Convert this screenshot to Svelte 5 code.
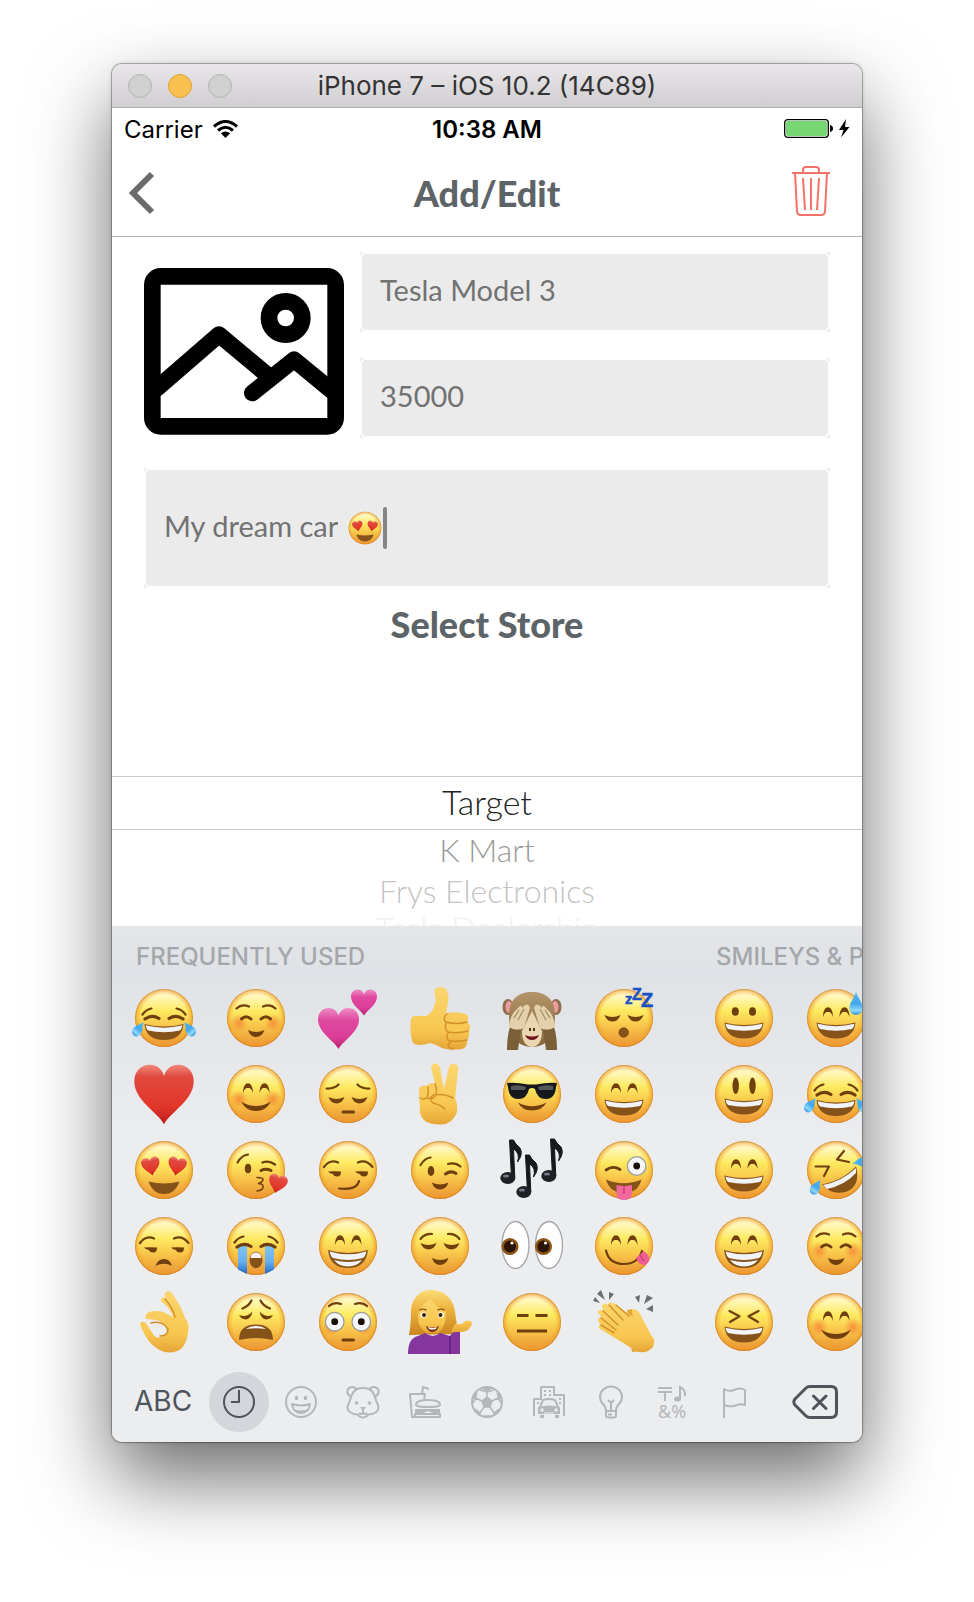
<script>
  let name = $state('Tesla Model 3');
  let price = $state('35000');
  let note = $state('My dream car');
  let store = $state('Target');
  const stores = ['Target', 'K Mart', 'Frys Electronics', 'Tesla Dealership'];

  const ink = '#6f3f0e';
  const line = (d, w = 2.2) =>
    `<path d="${d}" fill="none" stroke="${ink}" stroke-width="${w}" stroke-linecap="round" stroke-linejoin="round"/>`;
  const shape = (d, fill = '#85521a') => `<path d="${d}" fill="${fill}"/>`;
  const disc = `<circle cx="32" cy="32" r="29" fill="url(#skin)"/><circle cx="32" cy="32" r="29" fill="url(#rim)"/>`;
  const blush = `<circle cx="15" cy="37" r="9" fill="url(#blush)"/><circle cx="49" cy="37" r="9" fill="url(#blush)"/>`;
  const heart = (x, y, s, fill = 'url(#red)', r = 0) =>
    `<path transform="translate(${x} ${y}) rotate(${r}) scale(${s}) translate(-10 -10)" fill="${fill}" d="M10 20C8 16 0 12 0 5.5C0 2.3 2.2 0 5.2 0C7.6 0 9.4 1.500 10 3.800C10.600 1.500 12.400 0 14.800 0C17.800 0 20 2.300 20 5.500C20 12 12 16 10 20Z"/>`;
  const drop = (x, y, s = 1, r = 0) =>
    `<path transform="translate(${x} ${y}) rotate(${r}) scale(${s})" fill="url(#water)" d="M0 -11C2 -5 6 -1 6 4A6 6 0 0 1 -6 4C-6 -1 -2 -5 0 -11Z"/>`;
  const arch = (x, y) =>
    `<path d="M${x} ${y}C${x} ${y - 13} ${x + 10} ${y - 13} ${x + 10} ${y}C${x + 8} ${y - 5} ${x + 7} ${y - 5} ${x + 5} ${y - 5}C${x + 3} ${y - 5} ${x + 2} ${y - 5} ${x} ${y}Z" fill="${ink}"/>`;
  const arches = (y = 31) => arch(19, y) + arch(35.500, y);
  const bumps = line('M17.500 33Q22 28.500 27 33M37 33Q42 28.500 46.500 33', 3);
  const browsUp = line('M12.500 22.500Q18 17.500 25 20.500M39 20.500Q46 17.500 51.500 22.500');
  const lids = (y) => shape(`M12.500 ${y}Q20.500 ${y + 4} 28.500 ${y}Q26 ${y + 6.500} 20.500 ${y + 6.500}Q15 ${y + 6.500} 12.500 ${y}ZM35.500 ${y}Q43.500 ${y + 4} 51.500 ${y}Q49 ${y + 6.500} 43.500 ${y + 6.500}Q38 ${y + 6.500} 35.500 ${y}Z`, ink);
  const grin = (y = 37.500) =>
    shape(`M12.500 ${y}Q32 ${y + 5} 51.500 ${y}Q50 ${y + 16} 32 ${y + 16}Q14 ${y + 16} 12.500 ${y}Z`) +
    shape(`M13.500 ${y + 1.300}Q32 ${y + 6.200} 50.500 ${y + 1.300}Q50 ${y + 5} 48 ${y + 6.500}Q32 ${y + 10} 16 ${y + 6.500}Q14 ${y + 5} 13.500 ${y + 1.300}Z`, '#f1f3f6');
  const beam =
    shape('M12 36Q32 42 52 36Q50 54 32 54Q14 54 12 36Z') +
    shape('M13.500 37.500Q32 43 50.500 37.500Q49 43 47 44Q32 48 17 44Q15 43 13.500 37.500ZM18 46Q32 50 46 46Q41 52.500 32 52.500Q23 52.500 18 46Z', '#f1f3f6');
  const smallSmile = (y) => shape(`M24 ${y}Q32 ${y + 4} 40.500 ${y}Q38 ${y + 7} 32 ${y + 7}Q26 ${y + 7} 24 ${y}Z`, ink);
  const smile = shape('M17 39.500Q32 48.500 47 39.500Q42 49 32 49Q22 49 17 39.500Z', ink);
  const winkEyes =
    line('M12.500 27Q17 20 22.500 19.500M40 26Q47 24 52.500 28.500') +
    `<ellipse cx="23" cy="33" rx="3.300" ry="5" fill="${ink}"/>` + line('M37.500 36Q43 32 48 35.500', 3);
  const sideEyes = line('M8 29Q14 21 22 24.500M42 24.500Q50 21 56.500 29') +
    shape('M12 33.500Q18 33 25 33.500Q25 38.500 21.500 38.500Q17.500 38.500 17 36Q14 35.500 12 33.500ZM39 33.500Q45 33 52 33.500Q52 38.500 48.500 38.500Q44.500 38.500 44 36Q41 35.500 39 33.500Z', ink);
  const bigEye = (x, y) => `<circle cx="${x}" cy="${y}" r="9.300" fill="#f7f7f7" stroke="#9a9da0" stroke-width="1.300"/><circle cx="${x}" cy="${y}" r="3.400" fill="#17100a"/>`;
  const joyEyes = line('M10.500 28.500Q14 23.500 19.500 22.500M44.500 22.500Q50 23.500 53.500 28.500') + line('M13 33Q20 28 27 32.500M37 32.500Q44 28 51 33', 3.200);
  const note1 = (x, y, h) =>
    `<g transform="translate(${x} ${y})"><path d="M-1.500 0L0.500 ${h}L3.800 ${h}L2.500 9Q9.500 13 6.500 22Q12.500 14 9 8Q4 4 2.500 0Z" fill="#17191d" stroke="#17191d"/><ellipse cx="-3.200" cy="${h}" rx="7.500" ry="6" fill="#1d2025"/><ellipse cx="-5" cy="${h - 2}" rx="3" ry="1.500" fill="#727980"/></g>`;
  const seam = (d) => `<path d="${d}" fill="none" stroke="#d4912b" stroke-width="1.500" stroke-linecap="round"/>`;

  const art = {
    'tears of joy': disc + joyEyes + grin(38) + drop(6.500, 43, 0.800, 36) + drop(57.500, 43, 0.800, -36),
    'red heart': heart(32, 32.500, 2.970),
    'heart eyes': disc + heart(19, 28.500, 0.920, 'url(#red)', -10) + heart(45, 28.500, 0.920, 'url(#red)', 10) +
      shape('M16.500 43.500Q32 47.500 47.500 43.500Q43 56 32 56Q21 56 16.500 43.500Z'),
    unamused: disc + sideEyes + shape('M23.500 52Q26 45 32 45Q38 45 40 52Q32 47.500 23.500 52Z', ink),
    'ok hand':
      `<path fill="url(#hand)" d="M37 1C41 2 52 22 53 28Q58 34 56 42Q54 58 45 61Q36 65 26 59C16 53 12 44 8 34Q9 30 14 33Q17 38 21 44Q24 50 31 46Q36 43 34 39Q31 35 28 31Q20 29 14 29Q12 25 17 22Q28 19 35 24L41 27Q38 18 29 11Q28 7 33 8Q31 1 37 1Z"/><path fill="#ecedef" d="M22 36Q27 31 33 36Q37 43 29 45Q22 46 20 40Z"/>` +
      seam('M33 9Q41 18 43 27M19 33Q30 30 36 39Q36 46 28 46'),
    'soft smile': disc + blush + browsUp + bumps + smallSmile(44),
    'happy smile': disc + blush + arches() + smile,
    kiss: disc + line('M13.500 24.500Q18 17 24 16.500M38.500 24.500Q45 22 51 26.500') +
      `<ellipse cx="24" cy="30.500" rx="3.200" ry="4.800" fill="${ink}"/>` + line('M37 32.500Q42 30 47 32.500', 3) +
      line('M33 39.500Q40 39.500 39 42Q38 44.500 34.500 45.500Q40 46 39 49.500Q38 52.500 33 53', 1.600) + heart(53.500, 46, 0.940, 'url(#red)', 14),
    sobbing: disc + `<path d="M14 30H23V60L14 55.500ZM41 30H50V55.500L41 60Z" fill="url(#stream)"/>` + joyEyes +
      `<ellipse cx="32" cy="46" rx="6.500" ry="8.300" fill="#85521a"/>` + shape('M26.500 44Q27 38.500 32 38.500Q37 38.500 37.500 44Z', '#f4f4f4'),
    weary: disc + line('M18.500 18.500Q25 16 27.500 10.500M36.500 10.500Q39 16 46 18.500') +
      shape('M15 25Q23 28 28.500 21.500Q27 29 22 29.500Q17 29 15 25ZM49 25Q41 28 35.500 21.500Q37 29 42 29.500Q47 29 49 25Z', ink) +
      shape('M15 50Q15 34.500 32 34.500Q49 34.500 49 50Q32 46 15 50Z') + shape('M22 39Q26 36 32 36Q38 36 42 39Q32 37.500 22 39Z', '#f4f4f4'),
    'two hearts': heart(22.500, 42.500, 2.050, 'url(#pink)') + heart(48, 16.500, 1.300, 'url(#pink)'),
    pensive: disc + line('M10.500 26.500Q18 27 22.500 22.500M41.500 22.500Q46 27 53.500 26.500') + lids(35) + line('M27 50H37.500', 3),
    smirk: disc + sideEyes + line('M23 50.500Q41 52.500 43 43', 2.200),
    'beaming smile': disc + arches() + beam,
    flushed: disc + blush + line('M13 16Q18 11.500 25 14M39 14Q46 11.500 51 16') + bigEye(18.700, 31.700) + bigEye(45.300, 31.700) + line('M27 50H37.500', 3),
    'thumbs up':
      `<path fill="url(#hand)" d="M3 33Q4 29 10 30H18C24 28 27 19 28 14Q26 8 27 3Q32 -1 38 3C43 12 39 19 38 27Q50 25 58 28Q62 31 59 36Q64 39 61 45Q62 50 59 54Q60 61 54 63Q42 65 34 62Q27 58 22 57Q10 61 5 57Q1 46 3 33Z"/>` +
      seam('M39 28Q34 32 38 36Q48 39 59 36M38 37Q36 43 40 46Q49 48 60 45M40 47Q37 53 42 55Q50 56 59 54M42 56Q38 61 44 63'),
    victory:
      `<path fill="url(#hand)" d="M23 5Q24 1 28 1.500Q31 2 32 6L36 27L41 5Q43 1 47 2Q51 3 50 8L47 36Q50 43 49 50Q45 62 33 62.500Q14 63 12 50L11 27Q13 22 19 24Q22 19 27 22Z"/>` +
      seam('M20 25Q21 31 19 36Q15 38 12 36M27 22Q30 28 27 34Q24 38 20 36M45 36Q36 31 25 33Q20 37 25 41Q33 43 37 47'),
    wink: disc + winkEyes + smallSmile(44.500),
    relieved: disc + line('M12.500 25Q17 19.500 24 20M40 20Q47 19.500 51.500 25') + lids(29) + smallSmile(44),
    'tipping hand':
      `<path fill="url(#hair)" d="M1 45Q3 34 3 20C5 5 14 0 23 0C36 0 46 9 47 22Q49 35 50 44Z"/><path fill="url(#hand)" d="M10 25Q12 15 22 9Q31 19 38 22Q38 38 30 43H19Q9 38 10 25ZM43 42L47 34Q55 35 57 31Q64 30 64 34Q62 41 53 42Z"/><path fill="#84369e" d="M0 64Q0 48 10 46L17 43Q25 49 32 43L42 46Q44 42 48 42H52V64Z"/><path d="M42 46V64" stroke="#5c2176" stroke-width="1.500"/><ellipse cx="15.500" cy="25" rx="3" ry="2.800" fill="#fff"/><ellipse cx="33" cy="25" rx="3" ry="2.800" fill="#fff"/><circle cx="16" cy="25" r="2" fill="#3a2009"/><circle cx="32.500" cy="25" r="2" fill="#3a2009"/>` +
      line('M12 20Q15 18 18 20M30 20Q33 18 36 20', 1.200) + shape('M18 36Q24 39 31 36Q29 42 24 42Q20 42 18 36Z', '#78310f') + shape('M20 37Q25 39 29 37L28 39Q24 40 21 39Z', '#fff'),
    'covered eyes':
      `<ellipse cx="8" cy="21" rx="5.500" ry="8" fill="#8c6f48"/><ellipse cx="56" cy="21" rx="5.500" ry="8" fill="#8c6f48"/><ellipse cx="9" cy="21" rx="3.500" ry="6" fill="#ee9ba6"/><ellipse cx="55" cy="21" rx="3.500" ry="6" fill="#ee9ba6"/><path fill="url(#fur)" d="M9 28C9 14 18 6 32 6S55 14 55 28C55 42 53 60 32 61C11 60 9 42 9 28Z"/><path fill="#ead6b0" d="M32 25L42 45Q42 60 32 61Q22 60 22 45Z"/><path fill="#7b6037" d="M7 64Q7 50 10 41L21 42L18 64ZM57 64Q57 50 54 41L43 42L46 64Z"/><path fill="#e4d0aa" d="M9 41Q9 33 14 26L20 20Q22 19 22 22Q26 17 28 19Q31 20 29 25L24 42Q16 46 9 41ZM55 41Q55 33 50 26L44 20Q42 19 42 22Q38 17 36 19Q33 20 35 25L40 42Q48 46 55 41Z"/><path d="M14 32L19 24M18 34L24 23M50 32L45 24M46 34L40 23" stroke="#a98d61" stroke-width="1.200"/><path d="M30 42V45M34 42V45" stroke="#4e371d" stroke-width="2"/><path fill="#6e1720" d="M25 49Q32 52 39 49Q37 54 32 54Q27 54 25 49Z"/>`,
    sunglasses: disc + `<path fill="#16181b" d="M7 21Q16 20 28 22.500H36Q48 20 57 21L56 25Q55 37 46 37Q37 37 35 27Q32 25 29 27Q27 37 18 37Q9 37 8 25Z"/><path fill="#53585d" d="M11 24Q18 22 26 25L25 28H11ZM38 25Q46 22 53 24V28H39Z"/>` +
      shape('M18 40.500Q32 48 46.500 40.500Q42 48.500 32 48.500Q22 48.500 18 40.500Z', ink),
    'musical notes': note1(11, 2, 38) + note1(27, 17, 37) + note1(52, 1, 37),
    eyes: `<g stroke="#a3a5a8" stroke-width="1.300" fill="#fdfdfd"><ellipse cx="15.500" cy="31" rx="13.500" ry="23.500"/><ellipse cx="49" cy="31" rx="13.500" ry="23.500"/></g><g fill="#2b1305" stroke="#8d5617" stroke-width="2.500"><circle cx="10" cy="32.500" r="7.300"/><circle cx="43.500" cy="32.500" r="7.300"/></g><circle cx="12" cy="29" r="1.600" fill="#fff"/><circle cx="45.500" cy="29" r="1.600" fill="#fff"/>`,
    expressionless: disc + `<path d="M17 25.500H28.500M35.500 25.500H47.500M17 41H47" stroke="${ink}" stroke-width="3"/>`,
    sleeping: disc + lids(29) + `<circle cx="31.700" cy="46.500" r="4.600" fill="#85521a" stroke="${ink}"/><g font-family="Liberation Sans, sans-serif" font-weight="bold" fill="#1c52c4" stroke="#1c52c4" stroke-width=".6"><text x="33" y="17.500" font-size="15">z</text><text x="40" y="13.500" font-size="16">Z</text><text x="49" y="21" font-size="20">Z</text></g>`,
    'grinning squint': disc + arches() + grin(),
    'wink tongue': disc + line('M14 32Q21 27 28 31.500', 2.800) + bigEye(44.700, 28) +
      shape('M14 41.500Q32 49 49.500 41.500Q46 55 32 55Q18 55 14 41.500Z') + `<path d="M24.500 47Q32 49 40 47V56Q39 62 32 62Q25 62 24.500 56Z" fill="#f0699a"/><path d="M32 48V56" stroke="#cc3f78" stroke-width="1.500"/>`,
    yummy: disc + arches(31) + line('M14 36.500Q17 50 32 50Q46 50 50 37', 2.200) + `<path d="M44 44L52 37Q58 42 57 47Q53 54 47 49Z" fill="#ef5d93"/><path d="M48 41L52 47" stroke="#c93c74" stroke-width="1.300"/>`,
    clapping:
      `<path fill="#6c6f73" d="M1 11L3 7L8 13ZM5 4L9 0L13 10ZM17 2L22 4L17 10ZM43 7L48 5L47 13ZM52 14L55 5L61 8ZM54 19L61 15V22Z"/><path fill="#e5a63a" d="M35 20L40 19L47 30L50 61L40 62Z"/><path fill="url(#hand)" d="M6 31Q6 27 10 28L6 23Q6 18 11 21L10 16Q11 11 16 15Q17 10 23 14L41 27L40 20Q43 17 47 22L59 45Q64 50 61 57Q54 65 44 61L33 54L8 39Q5 35 9 35Z"/>` +
      seam('M11 21L26 35M17 15L31 30M9 28L24 40M24 15L37 26M9 35L22 43'),
    grinning: disc + `<ellipse cx="23.300" cy="25.500" rx="3.500" ry="4.300" fill="${ink}"/><ellipse cx="40.500" cy="25.500" rx="3.500" ry="4.300" fill="${ink}"/>` + grin(36.500),
    'wide grin': disc + `<ellipse cx="23.700" cy="23.800" rx="3.200" ry="8.300" fill="${ink}"/><ellipse cx="40.500" cy="23.800" rx="3.200" ry="8.300" fill="${ink}"/>` + grin(36.500),
    laughing: disc + line('M17.500 21L27.500 26.300L18 32M46.500 21L36.500 26.300L46 32') + grin(36.500),
    'sweat grin': disc + arches() + grin(36.500) + drop(52, 18, 1.100),
    'rolling laugh': disc + line('M11.500 28.500H25L20 38M40 13L33 21.500L45 24') +
      shape('M18 46.500Q38 43 52 28.500Q57 47 43 53.500Q28 58 18 46.500Z') + shape('M19 47Q38 43.500 52 30V35Q41 47 23 51Z', '#f1f3f6') + drop(12, 49, 0.800, 30) + drop(57, 24, 0.800, -100)
  };

  const sections = [
    {
      title: 'Frequently used',
      items: [
        'tears of joy', 'red heart', 'heart eyes', 'unamused', 'ok hand',
        'soft smile', 'happy smile', 'kiss', 'sobbing', 'weary',
        'two hearts', 'pensive', 'smirk', 'beaming smile', 'flushed',
        'thumbs up', 'victory', 'wink', 'relieved', 'tipping hand',
        'covered eyes', 'sunglasses', 'musical notes', 'eyes', 'expressionless',
        'sleeping', 'grinning squint', 'wink tongue', 'yummy', 'clapping'
      ]
    },
    {
      title: 'Smileys & People',
      items: [
        'grinning', 'wide grin', 'grinning squint', 'beaming smile', 'laughing',
        'sweat grin', 'tears of joy', 'rolling laugh', 'soft smile', 'happy smile'
      ]
    }
  ];

  const tabs = [
    { id: 'Recent', art: '<circle cx="17" cy="17" r="15"/><path d="M17 5V17H9"/>' },
    { id: 'Smileys', art: '<circle cx="17" cy="17" r="15"/><path d="M8 19Q17 22 26 19Q25 28 17 28Q9 28 8 19Z"/><path d="M10 24Q17 27 24 24Q21 28 17 28Q13 28 10 24Z" fill="currentColor" stroke="none"/><g fill="currentColor" stroke="none"><ellipse cx="12.500" cy="13" rx="1.700" ry="2.200"/><ellipse cx="21.500" cy="13" rx="1.700" ry="2.200"/></g>' },
    { id: 'Animals', art: '<path d="M5 12Q0 9 2 4Q6 0 11 4Q17 2 23 4Q28 0 32 4Q34 9 29 12Q30 16 32 20Q34 27 26 29Q22 29 21 31Q17 34 13 31Q12 29 8 29Q0 27 2 20Q4 16 5 12ZM5 12Q7 6 11 4M29 12Q27 6 23 4M17 25V28M13 28Q15 30 17 28Q19 30 21 28"/><g fill="currentColor" stroke="none"><circle cx="10.500" cy="18" r="1.800"/><circle cx="23.500" cy="18" r="1.800"/><path d="M14 22H20L17 26Z"/></g>' },
    { id: 'Food', art: '<path d="M7 32H4L2 9H17L16 15M14 9L15 2L21 4M8 20Q8 15 20 15Q32 15 32 20Q31 22 20 22Q9 22 8 20ZM7 29H32V32H7Z"/><path d="M7 24H32V28H25L20 26L15 28H7Z" fill="currentColor" stroke="none"/>' },
    { id: 'Activity', art: '<circle cx="17" cy="17" r="15"/><path d="M12 16L17 12L22 16L20 22H14ZM17 12V7M12 16L6 13M22 16L28 13M14 22L10 28M20 22L24 28M6 13L3 18M10 5L17 7L24 5M28 13L31 18M10 28L5 24M24 28L29 24M14 31L20 31" stroke-width="1.500"/><path d="M12 16L17 12L22 16L20 22H14ZM11 3L17 7L23 3L17 1.500ZM2 15L6 13L8 7L4 10ZM32 15L28 13L26 7L30 10ZM5 25L10 28L13 32L8 30ZM29 25L24 28L21 32L26 30Z" fill="currentColor" stroke="none"/>' },
    { id: 'Travel', art: '<path d="M2 31V14H9V2H22V10H32V31M8 22L11 15Q17 13 23 15L26 22"/><path d="M6 22Q17 19 28 22V29H6ZM8 30H12V33H8ZM23 30H27V33H23Z" fill="currentColor" stroke="none"/><g stroke="none" fill="currentColor"><path d="M12 5h2v2h-2zM17 5h2v2h-2zM12 9h2v2h-2zM17 9h2v2h-2zM5 17h2v2h-2zM27 13h2v2h-2zM27 17h2v2h-2z"/></g><circle cx="10" cy="25" r="1.700" fill="#ecedef" stroke="none"/><circle cx="24" cy="25" r="1.700" fill="#ecedef" stroke="none"/><path d="M12 28H22" stroke="#ecedef" stroke-width="1"/>' },
    { id: 'Objects', art: '<path d="M12 26Q12 22 9 19Q6 16 6 12A11 10.500 0 0 1 28 12Q28 16 25 19Q22 22 22 26V31Q22 32.500 20 32.500H14Q12 32.500 12 31ZM12 26H22M14 15L17 18L20 15M17 18V25M14 29.500H18"/>' },
    { id: 'Symbols', art: '' },
    { id: 'Flags', art: '<path d="M6 33V4Q11 7 16 5Q22 2 27 5V20Q22 18 16 21Q11 22 6 20"/>' }
  ];
  let active = $state('Recent');
</script>

<svg class="defs" aria-hidden="true">
  <defs>
    <linearGradient id="skin" x1="0" y1="0" x2="0" y2="1">
      <stop offset="0" stop-color="#fffbe2" /><stop offset=".16" stop-color="#fff6b0" />
      <stop offset=".38" stop-color="#fdea60" /><stop offset=".68" stop-color="#f7c047" /><stop offset="1" stop-color="#ea9232" />
    </linearGradient>
    <radialGradient id="rim">
      <stop offset=".8" stop-color="#f2a22c" stop-opacity="0" /><stop offset=".94" stop-color="#f0a02c" stop-opacity=".55" /><stop offset="1" stop-color="#c9751c" stop-opacity=".9" />
    </radialGradient>
    <radialGradient id="blush"><stop offset="0" stop-color="#f5702c" stop-opacity=".65" /><stop offset="1" stop-color="#f5702c" stop-opacity="0" /></radialGradient>
    <linearGradient id="red" x1="0" y1="0" x2="0" y2="1"><stop offset="0" stop-color="#f2877c" /><stop offset=".2" stop-color="#e04a3f" /><stop offset=".7" stop-color="#e33529" /><stop offset="1" stop-color="#b81f1b" /></linearGradient>
    <linearGradient id="pink" x1="0" y1="0" x2="0" y2="1"><stop offset="0" stop-color="#ee8cc6" /><stop offset=".3" stop-color="#e0499f" /><stop offset=".7" stop-color="#dc3d98" /><stop offset="1" stop-color="#b8256c" /></linearGradient>
    <linearGradient id="water" x1="0" y1="0" x2="0" y2="1"><stop offset="0" stop-color="#5cb9f0" /><stop offset=".5" stop-color="#3fa6ee" /><stop offset=".8" stop-color="#8fd8fb" /><stop offset="1" stop-color="#2f8fe0" /></linearGradient>
    <linearGradient id="stream" x1="0" y1="0" x2="0" y2="1"><stop offset="0" stop-color="#86c4f3" /><stop offset=".6" stop-color="#65b0ee" /><stop offset="1" stop-color="#1f67cc" /></linearGradient>
    <linearGradient id="hand" x1="0" y1="0" x2="0" y2="1"><stop offset="0" stop-color="#fbd670" /><stop offset=".7" stop-color="#f7c64f" /><stop offset="1" stop-color="#e6a537" /></linearGradient>
    <linearGradient id="hair" x1="0" y1="0" x2="0" y2="1"><stop offset="0" stop-color="#fbdc78" /><stop offset=".4" stop-color="#efb540" /><stop offset="1" stop-color="#c98420" /></linearGradient>
    <linearGradient id="fur" x1="0" y1="0" x2="0" y2="1"><stop offset="0" stop-color="#b39468" /><stop offset="1" stop-color="#86683d" /></linearGradient>
  </defs>
</svg>

<main class="desktop">
  <div class="window">
    <header class="titlebar">
      <div class="lights">
        <button aria-label="Close"></button>
        <button class="amber" aria-label="Minimize"></button>
        <button aria-label="Zoom"></button>
      </div>
      <h1>iPhone 7 – iOS 10.2 (14C89)</h1>
    </header>

    <div class="status">
      <div class="carrier">
        <span>Carrier</span>
        <svg width="25" height="18" viewBox="0 0 25 18" aria-hidden="true">
          <path d="M1 6.500Q12.500 -3.500 24 6.500M5 10.500Q12.500 4 20 10.500" fill="none" stroke="#000" stroke-width="3" />
          <path d="M7.800 13.300Q12.500 9.700 17.200 13.300L12.500 18Z" />
        </svg>
      </div>
      <strong>10:38 AM</strong>
      <div class="power">
        <svg width="66" height="20" viewBox="0 0 66 20" aria-hidden="true">
          <rect x=".7" y=".7" width="43.600" height="17.600" rx="3" fill="#fff" stroke="#000" stroke-width="1.300" />
          <rect x="2" y="2" width="41" height="15" rx="2" fill="#76d672" />
          <path d="M46 6Q49 6.500 49 9.500T46 13Z" />
          <path d="M62 0L55 11H59.500L57 18.500L65.500 8H61Z" />
        </svg>
      </div>
    </div>

    <nav class="navbar">
      <button class="back" aria-label="Back">
        <svg width="28" height="44" viewBox="0 0 28 44"><path d="M24 3L5 22L24 41" fill="none" stroke="#6b6b6b" stroke-width="6" /></svg>
      </button>
      <h2>Add/Edit</h2>
      <button class="trash" aria-label="Delete item">
        <svg width="38" height="50" viewBox="0 0 38 50" fill="none" stroke="#f27268" stroke-width="2">
          <path d="M0 7H38M11 7V4Q11 1 14 1H24Q27 1 27 4V7M3 7L5 45Q5 49 9 49H29Q33 49 33 45L35 7M11 12L13 44M19 12V44M27 12L25 44" />
        </svg>
      </button>
    </nav>

    <form class="form" onsubmit={(e) => e.preventDefault()}>
      <div class="row">
        <button type="button" class="photo" aria-label="Choose photo">
          <svg viewBox="0 0 24 20" fill="none" stroke="#000" stroke-width="2" stroke-linecap="round" stroke-linejoin="round">
            <rect x="1" y="1" width="22" height="18" rx="1" />
            <circle cx="17" cy="6" r="2" />
            <path d="M1.500 14.500L9 8L15 13M13 15L18 11L22.500 14.700" />
          </svg>
        </button>
        <div class="fields">
          <label class="field"><span class="inner"><input aria-label="Title" bind:value={name} /></span></label>
          <label class="field"><span class="inner"><input aria-label="Price" bind:value={price} /></span></label>
        </div>
      </div>
      <label class="field tall">
        <span class="inner">
          <input class="note" aria-label="Details" bind:value={note} />
          <svg class="mini" viewBox="0 0 64 64" aria-hidden="true">{@html art['heart eyes']}</svg>
          <i class="caret"></i>
        </span>
      </label>
      <h2>Select Store</h2>
    </form>

    <ul class="picker" role="listbox" aria-label="Store">
      {#each stores as s}
        <li role="option" aria-selected={s === store}>{s}</li>
      {/each}
    </ul>

    <section class="keyboard" aria-label="Emoji keyboard">
      <div class="pages">
        {#each sections as section}
          <div class="page">
            <h3>{section.title}</h3>
            <div class="emojis">
              {#each section.items as item}
                <button aria-label={item}><svg viewBox="0 0 64 64">{@html art[item]}</svg></button>
              {/each}
            </div>
          </div>
        {/each}
      </div>
      <div class="tabs">
        <button class="abc">ABC</button>
        <div class="categories">
          {#each tabs as tab}
            <button class:active={tab.id === active} aria-label={tab.id} onclick={() => (active = tab.id)}>
              {#if tab.id === 'Symbols'}
                <svg class="symbols" viewBox="0 0 34 34">
                  <path d="M2 3H16M2 7H16M9 7V16M24 14V2Q30 5 29 11" fill="none" stroke="currentColor" stroke-width="2" />
                  <ellipse cx="21.500" cy="14" rx="3.500" ry="2.500" fill="currentColor" />
                  <text x="2" y="33" font-size="18" fill="currentColor">&amp;%</text>
                </svg>
              {:else}
                <svg viewBox="0 0 34 34" fill="none" stroke="currentColor" stroke-width="2" stroke-linejoin="round">{@html tab.art}</svg>
              {/if}
            </button>
          {/each}
        </div>
        <button class="erase" aria-label="Erase">
          <svg width="46" height="34" viewBox="0 0 46 34" fill="none" stroke="#4e535c" stroke-width="3" stroke-linecap="round" stroke-linejoin="round">
            <path d="M2 17Q1.500 16 3 14L14 3Q15.500 1.500 18 1.500H39Q44.500 1.500 44.500 7V27Q44.500 32.500 39 32.500H18Q15.500 32.500 14 31L3 20Q1.500 18 2 17ZM21.500 11L34 23.500M34 11L21.500 23.500" />
          </svg>
        </button>
      </div>
    </section>
  </div>
</main>

<style>
  :global(body) { background: #fff; }
  .defs { position: absolute; width: 0; height: 0; }
  .desktop { padding: 64px 112px 160px; font-family: Inter, "Liberation Sans", sans-serif; }
  h1, h2, h3, ul { margin: 0; padding: 0; }
  button { padding: 0; border: 0; background: none; font: inherit; color: inherit; cursor: pointer; }
  svg { display: block; }
  .window {
    overflow: hidden;
    border-radius: 10px;
    background: #fff;
    box-shadow: 0 0 0 1px rgba(0, 0, 0, 0.25), 0 0 4px rgba(0, 0, 0, 0.2), 0 36px 80px rgba(0, 0, 0, 0.58);
  }
  .titlebar {
    display: grid;
    grid-template-columns: 1fr auto 1fr;
    align-items: center;
    height: 43px;
    padding: 0 16px;
    border-bottom: 1px solid #b0abb1;
    background: linear-gradient(#e9e7ea, #d1ced2);
  }
  .lights { display: flex; gap: 16px; }
  .lights button { width: 24px; height: 24px; border: 1px solid #b4b4b4; border-radius: 50%; background: #d0d0d0; }
  .lights .amber { border-color: #dda03c; background: #f8c04e; }
  h1 { font-size: 26px; font-weight: 400; color: #333; }
  .status {
    display: grid;
    grid-template-columns: 1fr auto 1fr;
    align-items: center;
    height: 42px;
    padding: 0 12px;
    font-size: 24px;
    color: #000;
  }
  .status strong { font-weight: 600; }
  .carrier { display: flex; align-items: center; gap: 10px; }
  .power { display: flex; justify-content: flex-end; }
  .navbar {
    display: grid;
    grid-template-columns: 1fr auto 1fr;
    align-items: center;
    height: 86px;
    padding: 0 16px;
    border-bottom: 1px solid #b2b2b2;
  }
  .back { justify-self: start; }
  .trash { justify-self: end; padding: 0 16px 4px 0; }
  h2 { font: 900 36px/40px Lato, sans-serif; color: #5d6468; text-align: center; }
  .form { display: flex; flex-direction: column; padding: 15px 32px 0; }
  .row { display: flex; align-items: flex-start; gap: 16px; }
  .photo { width: 200px; margin-top: 16px; }
  .fields { display: flex; flex: 1; flex-direction: column; gap: 26px; }
  .field { display: block; height: 80px; background: #ebebeb; }
  .inner {
    display: flex;
    align-items: center;
    box-sizing: border-box;
    height: 100%;
    padding: 0 18px;
    border: 2px solid #fff;
    border-radius: 6px;
    background: #ebebeb;
  }
  .field.tall { height: 120px; margin-top: 30px; }
  input {
    width: 100%;
    min-width: 0;
    padding: 0 0 4px;
    border: 0;
    outline: 0;
    background: none;
    font: 400 29px/40px Lato, sans-serif;
    color: #727272;
  }
  .note { width: auto; field-sizing: content; }
  .mini { width: 36px; height: 36px; margin-left: 9px; }
  .caret { width: 4px; height: 42px; border-radius: 2px; background: #858585; }
  .form h2 { padding: 16px 0; }
  .picker {
    height: 150px;
    padding-top: 116px;
    overflow: hidden;
    list-style: none;
    text-align: center;
    font: 300 32px/42px Lato, sans-serif;
    color: #c4c4c4;
  }
  .picker li[aria-selected='true'] {
    padding-bottom: 2px;
    border: solid #c8c8c8;
    border-width: 1px 0;
    font-size: 34px;
    line-height: 50px;
    color: #222;
  }
  .picker li:nth-child(2) { line-height: 40px; color: #999; }
  .picker li:nth-child(4) { line-height: 32px; color: #f1f1f1; }
  .keyboard { overflow: hidden; background: linear-gradient(#e4e6e9, #dfe2e6 44px, #ecedef 220px); }
  .pages { display: flex; gap: 56px; padding: 16px 0 18px 20px; }
  .page { flex: none; width: min-content; }
  h3 {
    height: 44px;
    padding-left: 4px;
    font-size: 24px;
    font-weight: 500;
    line-height: 30px;
    white-space: nowrap;
    text-transform: uppercase;
    color: #a4a7ac;
  }
  .page + .page h3 { width: 0; }
  .emojis { display: grid; grid-template-rows: repeat(5, 64px); grid-auto-columns: 64px; grid-auto-flow: column; gap: 12px 28px; }
  .emojis svg { width: 64px; height: 64px; overflow: visible; }
  .tabs { display: flex; align-items: center; padding: 0 24px 10px 22px; }
  .abc { width: 75px; padding-bottom: 2px; text-align: left; font-size: 28px; color: #4e535c; }
  .categories { display: flex; flex: 1; gap: 2px; }
  .categories button { display: grid; place-items: center; width: 60px; height: 60px; border-radius: 50%; color: #b3b6bb; }
  .categories .active { background: #d3d7dc; color: #4e535c; }
  .categories svg { width: 34px; height: 34px; }
  .categories .symbols { overflow: visible; font-family: "Noto Sans", sans-serif; }
</style>
